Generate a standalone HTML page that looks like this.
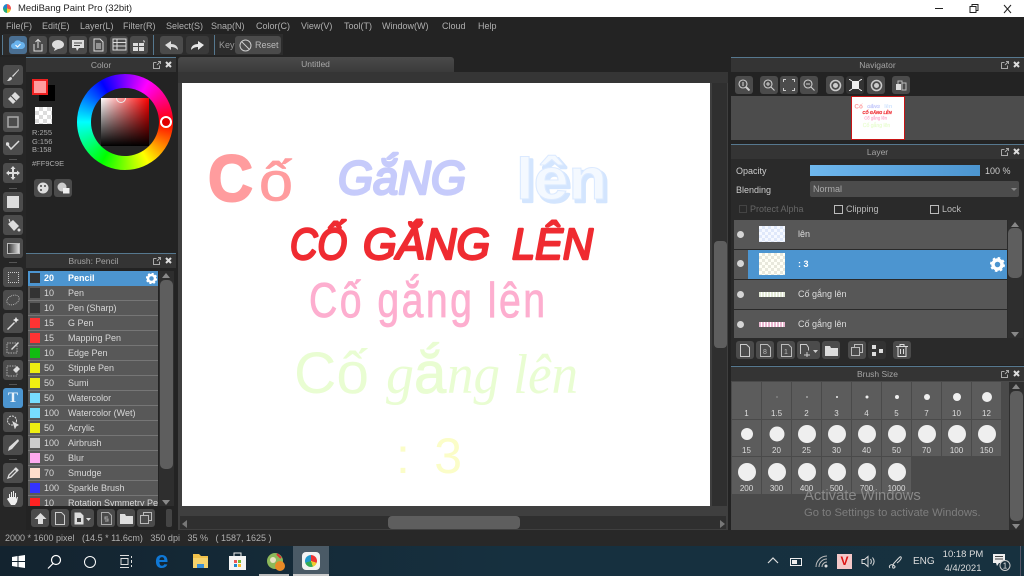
<!DOCTYPE html>
<html><head><meta charset="utf-8"><title>MediBang Paint Pro</title>
<style>
*{box-sizing:border-box}
html,body{margin:0;padding:0;background:#232323}
body{width:1024px;height:576px;overflow:hidden;background:#232323;position:relative;font-family:"Liberation Sans","Noto Sans CJK SC",sans-serif;font-size:9px;color:#c8c8c8;filter:blur(.35px)}
.a{position:absolute}
.t{position:absolute;white-space:nowrap}
.menu span{position:absolute;top:21px;font-size:9px;color:#b0b0b0;white-space:nowrap}
.b{position:absolute;width:18px;height:18px;background:#4b4b4b;border-radius:3px;display:flex;align-items:center;justify-content:center}
.tool{position:absolute;left:3px;width:20px;height:20px;background:#4c4c4c;border-radius:3px;display:flex;align-items:center;justify-content:center}
.sep{position:absolute;left:9px;width:8px;height:1px;background:#555}
.ph{position:absolute;height:15px;background:#343434;border-top:1px solid #56788f;text-align:center;font-size:8.5px;line-height:15px;color:#a5a5a5}
.row{position:absolute;left:28px;width:130px;height:15px;background:#585858;border-bottom:1px solid #767676;font-size:9px;line-height:14px;color:#d8d8d8}
.row i{position:absolute;left:2px;top:2px;width:10px;height:10px;display:block}
.row b{position:absolute;left:16px;font-weight:normal}
.row u{position:absolute;left:40px;text-decoration:none;white-space:nowrap}
.lay{position:absolute;left:734px;width:273px;height:29px;background:#575757;font-size:9px;color:#ddd;line-height:28px}
.dot{position:absolute;left:737px;width:7px;height:7px;border-radius:50%;background:#d5d5d5}
.ck{background-size:6px 6px}
.cell{position:absolute;width:29px;height:36px;background:#5c5c5c;text-align:center;font-size:8px;color:#ddd}
.cell s{position:absolute;left:50%;top:15px;transform:translate(-50%,-50%);background:#efefef;border-radius:50%;display:block}
.cell em{position:absolute;left:0;right:0;bottom:0;font-style:normal;line-height:10px}
.up,.dn{position:absolute;width:0;height:0;border-left:4px solid transparent;border-right:4px solid transparent}
.up{border-bottom:5px solid #888}
.dn{border-top:5px solid #888}
</style></head><body>

<!-- title bar -->
<div class="a" style="left:0;top:0;width:1024px;height:17px;background:#fff"></div>
<div class="a" style="left:3px;top:4px;width:8px;height:9px;border-radius:50%;background:conic-gradient(#e55 0 30%,#ec3 0 50%,#2a7 0 75%,#28c 0)"></div>
<div class="t" style="left:18px;top:3px;font-size:9.5px;color:#222">MediBang Paint Pro (32bit)</div>
<svg class="a" style="left:930px;top:2px" width="94" height="14" fill="none" stroke="#222"><path d="M5 6.500h8"/><path d="M40 4.500h6v6h-6zM42 4.500v-2h6v6h-2"/><path d="M74 3l7 8M81 3l-7 8"/></svg>

<!-- menu -->
<div class="menu">
<span style="left:6px">File(F)</span><span style="left:42px">Edit(E)</span><span style="left:80px">Layer(L)</span><span style="left:123px">Filter(R)</span><span style="left:166px">Select(S)</span><span style="left:211px">Snap(N)</span><span style="left:256px">Color(C)</span><span style="left:301px">View(V)</span><span style="left:344px">Tool(T)</span><span style="left:382px">Window(W)</span><span style="left:442px">Cloud</span><span style="left:478px">Help</span>
</div>

<!-- toolbar -->
<div class="a" style="left:3px;top:34px;width:280px;height:21px;background:#2c2c2c"></div>
<div class="a" style="left:2px;top:35px;width:1px;height:20px;background:#56788f"></div>
<div class="a" style="left:153px;top:35px;width:1px;height:20px;background:#56788f"></div>
<div class="a" style="left:214px;top:35px;width:1px;height:20px;background:#56788f"></div>
<div class="b" style="left:9px;top:36px;background:#4a6f92"><svg width="14" height="12"><path d="M3 10a3 3 0 0 1 0-6 4 4 0 0 1 7-1 3.500 3.500 0 0 1 1 7z" fill="#69b3ee"/><path d="M4.500 6l2 2 3-3" stroke="#fff" fill="none"/></svg></div>
<div class="b" style="left:29px;top:36px"><svg width="12" height="14" fill="none" stroke="#ddd"><path d="M2 6v7h8V6M6 10V2M3.500 4L6 1.500 8.500 4"/></svg></div>
<div class="b" style="left:49px;top:36px"><svg width="14" height="12"><ellipse cx="7" cy="5.500" rx="6" ry="4.500" fill="#ddd"/><path d="M4 9l-1 3 4-2z" fill="#ddd"/></svg></div>
<div class="b" style="left:69px;top:36px"><svg width="14" height="13"><path d="M1 1h12v8H8l-2 3-1-3H1z" fill="#ddd"/><path d="M3 4h8M3 6.500h6" stroke="#444"/></svg></div>
<div class="b" style="left:89px;top:36px"><svg width="11" height="14" fill="none" stroke="#ddd"><path d="M1 1h6l3 3v9H1zM3 6h5M3 8h5M3 10h5"/></svg></div>
<div class="b" style="left:110px;top:36px"><svg width="15" height="14" fill="none" stroke="#ddd"><path d="M1 1h13v11H1zM1 4.500h13M1 8h13M5 1v11"/></svg></div>
<div class="b" style="left:130px;top:36px"><svg width="14" height="13"><path d="M1 4h5v3H1zM7 4h5v3H7zM1 8h5v4H1zM7 8h5v4H7z" fill="#ddd"/><path d="M11 1l2 1-1 2z" fill="#ddd"/></svg></div>
<div class="b" style="left:160px;top:36px;width:23px"><svg width="15" height="11"><path d="M1 5l6-4v3c4 0 7 2 7 6-2-2-4-3-7-3v3z" fill="#ddd"/></svg></div>
<div class="b" style="left:186px;top:36px;width:23px;background:#3a3a3a"><svg width="15" height="11"><path d="M14 5L8 1v3C4 4 1 6 1 10c2-2 4-3 7-3v3z" fill="#e8e8e8"/></svg></div>
<div class="t" style="left:219px;top:40px;color:#999">Key</div>
<div class="b" style="left:235px;top:36px;width:46px;justify-content:flex-start;padding-left:4px"><svg width="13" height="13" fill="none" stroke="#ccc"><circle cx="6.500" cy="6.500" r="5.500"/><path d="M3 3l7 7"/></svg><span style="margin-left:3px;color:#bbb">Reset</span></div>

<!-- left tools -->
<div class="a" style="left:0;top:57px;width:26px;height:473px;background:#262626"></div>
<div class="tool" style="top:65px"><svg width="14" height="14"><path d="M13 1L6 8l1 1 6-7zM5 9c-2 0-2 2-4 4 3 0 5-1 5-3z" fill="#ddd"/></svg></div>
<div class="tool" style="top:88px"><svg width="15" height="14"><path d="M9 1l5 5-7 7-5-5z" fill="#ddd"/><path d="M5 5l5 5" stroke="#444"/></svg></div>
<div class="tool" style="top:112px"><svg width="12" height="12" fill="none" stroke="#aaa" stroke-width="1.500"><rect x="1" y="1" width="10" height="10"/></svg></div>
<div class="tool" style="top:135px"><svg width="14" height="13" fill="none" stroke="#ddd" stroke-width="1.500"><path d="M1 5l4 5 8-8"/><circle cx="1.500" cy="5" r="1" fill="#ddd"/></svg></div>
<div class="sep" style="top:159px"></div>
<div class="tool" style="top:163px"><svg width="14" height="14" fill="#ddd"><path d="M6 3h2v3h3v2H8v3H6V8H3V6h3z"/><path d="M7 0l2.500 3h-5zM7 14l-2.500-3h5zM0 7l3-2.500v5zM14 7l-3-2.500v5z"/></svg></div>
<div class="sep" style="top:188px"></div>
<div class="tool" style="top:192px"><div style="width:12px;height:12px;background:#ddd"></div></div>
<div class="tool" style="top:215px"><svg width="15" height="15"><path d="M2 6l5-4 6 6-5 5z" fill="#ddd"/><path d="M4 4L3 1" stroke="#ddd"/><circle cx="13" cy="12" r="1.500" fill="#ddd"/></svg></div>
<div class="tool" style="top:238px"><div style="width:13px;height:11px;background:linear-gradient(90deg,#333,#ddd);border:1px solid #bbb"></div></div>
<div class="sep" style="top:262px"></div>
<div class="tool" style="top:267px"><div style="width:11px;height:11px;border:1px dotted #ccc"></div></div>
<div class="tool" style="top:290px"><div style="width:14px;height:10px;border:1px dotted #bbb;border-radius:50%;transform:rotate(-25deg)"></div></div>
<div class="tool" style="top:313px"><svg width="14" height="14"><path d="M1 13l7-7 1 1-7 7z" fill="#ddd"/><path d="M10 1l1 2 2 1-2 1-1 2-1-2-2-1 2-1z" fill="#eee"/></svg></div>
<div class="tool" style="top:337px"><svg width="14" height="14"><rect x="1" y="3" width="10" height="10" fill="none" stroke="#aaa" stroke-dasharray="1.500 1"/><path d="M5 9l7-7 1 1-7 7z" fill="#ddd"/></svg></div>
<div class="tool" style="top:360px"><svg width="14" height="14"><rect x="1" y="3" width="10" height="10" fill="none" stroke="#aaa" stroke-dasharray="1.500 1"/><path d="M7 7l4-4 3 3-4 4z" fill="#ddd"/></svg></div>
<div class="sep" style="top:384px"></div>
<div class="tool" style="top:388px;background:#4c95d0;font:bold 15px 'Liberation Serif',serif;color:#e8f2fa">T</div>
<div class="tool" style="top:412px"><svg width="14" height="14" fill="none" stroke="#ddd"><circle cx="6" cy="5.500" r="4.500" stroke-dasharray="2 1"/><path d="M7 7l5 3-2 1-1 2z" fill="#ddd"/></svg></div>
<div class="tool" style="top:435px"><svg width="14" height="14"><path d="M12 1l1 2-7 8-4 2 1-4z" fill="#ddd"/></svg></div>
<div class="sep" style="top:459px"></div>
<div class="tool" style="top:463px"><svg width="14" height="14" fill="none" stroke="#ddd" stroke-width="1.300"><path d="M2 12l1-3 6-6 2 2-6 6z"/><path d="M9 2l3 3" stroke-width="2.500"/></svg></div>
<div class="tool" style="top:487px"><svg width="14" height="15"><path d="M3 8V4h1v3h1V2h1v5h1V1h1v6h1V3h1v6l1-2h1l-1 5-2 3H5L1 9l1-1z" fill="#eee"/></svg></div>

<!-- color panel -->
<div class="a" style="left:26px;top:57px;width:150px;height:195px;background:#232323"></div>
<div class="ph" style="left:26px;top:57px;width:150px">Color</div>
<svg class="a" style="left:152px;top:60px" width="24" height="10" fill="none" stroke="#aaa"><path d="M1.500 2.500h3M1.500 2.500v6h6v-3M5 5l3-3M6 1.500h2.500V4"/><path d="M14 2l5 5M19 2l-5 5" stroke="#ddd" stroke-width="2"/></svg>
<div class="a" style="left:39px;top:85px;width:16px;height:16px;background:#000"></div>
<div class="a" style="left:32px;top:79px;width:16px;height:16px;background:#ff9c9e;border:2px solid #ee2020"></div>
<div class="a" style="left:35px;top:107px;width:17px;height:17px;background:conic-gradient(#dcdcdc 25%,#fff 0 50%,#dcdcdc 0 75%,#fff 0);background-size:8px 8px"></div>
<div class="t" style="left:32px;top:129px;font-size:7.500px;line-height:8.500px;color:#aaa">R:255<br>G:156<br>B:158</div>
<div class="t" style="left:32px;top:159px;font-size:7.500px;color:#aaa">#FF9C9E</div>
<div class="b" style="left:34px;top:179px"><svg width="12" height="12"><circle cx="6" cy="6" r="5.500" fill="#ddd"/><circle cx="4" cy="4" r="1" fill="#444"/><circle cx="8" cy="4" r="1" fill="#444"/><circle cx="4" cy="8" r="1" fill="#444"/></svg></div>
<div class="b" style="left:54px;top:179px"><svg width="13" height="12"><circle cx="5" cy="5" r="4.500" fill="#ccc"/><rect x="6" y="6" width="6.500" height="5.500" fill="#eee"/></svg></div>
<div class="a" style="left:77px;top:74px;width:96px;height:96px;border-radius:50%;background:conic-gradient(from 90deg,#f00,#ff0,#0f0,#0ff,#00f,#f0f,#f00)"></div>
<div class="a" style="left:91px;top:88px;width:68px;height:68px;border-radius:50%;background:#232323"></div>
<div class="a" style="left:101px;top:98px;width:48px;height:48px;background:linear-gradient(0deg,#000,transparent),linear-gradient(90deg,#fff,#f00);overflow:hidden"><div class="a" style="left:15px;top:-5px;width:10px;height:10px;border:1.500px solid #eee;border-radius:50%"></div></div>
<div class="a" style="left:160px;top:116px;width:12px;height:12px;border-radius:50%;border:2.500px solid #fff;background:#e00000"></div>

<!-- brush panel -->
<div class="a" style="left:26px;top:253px;width:150px;height:277px;background:#232323"></div>
<div class="ph" style="left:26px;top:253px;width:150px;padding-right:15px">Brush: Pencil</div>
<svg class="a" style="left:152px;top:256px" width="24" height="10" fill="none" stroke="#aaa"><path d="M1.500 2.500h3M1.500 2.500v6h6v-3M5 5l3-3M6 1.500h2.500V4"/><path d="M14 2l5 5M19 2l-5 5" stroke="#ddd" stroke-width="2"/></svg>
<div class="a" style="left:28px;top:271px;width:130px;height:235px;overflow:hidden">
<div class="row" style="left:0;top:0;background:#4c95d0;color:#fff;font-weight:bold;border:0"><i style="background:#333"></i><b style="font-weight:bold">20</b><u>Pencil</u><svg class="a" style="left:118px;top:2px" width="11" height="11"><circle cx="5.500" cy="5.500" r="3.500" fill="none" stroke="#fff" stroke-width="2.500"/><circle cx="5.500" cy="5.500" r="5" fill="none" stroke="#fff" stroke-width="1.500" stroke-dasharray="2 1.930"/></svg></div>
<div class="row" style="left:0;top:15px"><i style="background:#333"></i><b>10</b><u>Pen</u></div>
<div class="row" style="left:0;top:30px"><i style="background:#333"></i><b>10</b><u>Pen (Sharp)</u></div>
<div class="row" style="left:0;top:45px"><i style="background:#f33"></i><b>15</b><u>G Pen</u></div>
<div class="row" style="left:0;top:60px"><i style="background:#f33"></i><b>15</b><u>Mapping Pen</u></div>
<div class="row" style="left:0;top:75px"><i style="background:#1b1"></i><b>10</b><u>Edge Pen</u></div>
<div class="row" style="left:0;top:90px"><i style="background:#ee1"></i><b>50</b><u>Stipple Pen</u></div>
<div class="row" style="left:0;top:105px"><i style="background:#ee1"></i><b>50</b><u>Sumi</u></div>
<div class="row" style="left:0;top:120px"><i style="background:#7df"></i><b>50</b><u>Watercolor</u></div>
<div class="row" style="left:0;top:135px"><i style="background:#7df"></i><b>100</b><u>Watercolor (Wet)</u></div>
<div class="row" style="left:0;top:150px"><i style="background:#ee1"></i><b>50</b><u>Acrylic</u></div>
<div class="row" style="left:0;top:165px"><i style="background:#ccc"></i><b>100</b><u>Airbrush</u></div>
<div class="row" style="left:0;top:180px"><i style="background:#fae"></i><b>50</b><u>Blur</u></div>
<div class="row" style="left:0;top:195px"><i style="background:#fdc"></i><b>70</b><u>Smudge</u></div>
<div class="row" style="left:0;top:210px"><i style="background:#33f"></i><b>100</b><u>Sparkle Brush</u></div>
<div class="row" style="left:0;top:225px"><i style="background:#f22"></i><b>10</b><u>Rotation Symmetry Pen</u></div>
</div>
<div class="a" style="left:159px;top:271px;width:15px;height:235px;background:#2e2e2e"></div>
<div class="a" style="left:160px;top:280px;width:13px;height:189px;background:#5e5e5e;border-radius:5px"></div>
<div class="up" style="left:162px;top:273px"></div><div class="dn" style="left:162px;top:500px"></div>
<div class="b" style="left:31px;top:509px"><svg width="13" height="13"><path d="M6.500 1l6 6H9v5H4V7H.500z" fill="#ddd"/></svg></div>
<div class="b" style="left:51px;top:509px"><svg width="10" height="13" fill="none" stroke="#ccc"><path d="M.500.500h6l3 3v9h-9z"/></svg></div>
<div class="b" style="left:71px;top:509px;width:23px;justify-content:flex-start;padding-left:3px"><svg width="17" height="13"><path d="M.500.500h6l3 3v9h-9z" fill="#ddd"/><path d="M3 6h4v4H3z" fill="#444"/><path d="M12 6h5l-2.500 3z" fill="#ddd"/></svg></div>
<div class="b" style="left:97px;top:509px"><svg width="11" height="13" fill="none" stroke="#aaa"><path d="M.500.500h7l3 3v9h-10zM7 5H4v2h3v2H4"/></svg></div>
<div class="b" style="left:117px;top:509px"><svg width="13" height="11"><path d="M0 1h5l1 2h7v8H0z" fill="#ddd"/></svg></div>
<div class="b" style="left:137px;top:509px"><svg width="12" height="12" fill="none" stroke="#bbb"><path d="M.500 3.500h8v8h-8zM3.500 3.500v-3h8v8h-3"/></svg></div>
<div class="a" style="left:166px;top:509px;width:6px;height:18px;background:#444;border-radius:2px"></div>

<!-- canvas area -->
<div class="a" style="left:178px;top:57px;width:276px;height:15px;background:linear-gradient(#4a4a4a,#3a3a3a);border-radius:3px 3px 0 0;text-align:center;line-height:15px;font-size:8.500px;color:#aaa;padding-right:1px">Untitled</div>
<div class="a" style="left:178px;top:72px;width:550px;height:458px;background:#3f3f3f"></div>
<div class="a" style="left:178px;top:72px;width:550px;height:11px;background:#353535"></div>
<div class="a" style="left:182px;top:83px;width:528px;height:423px;background:#fff"></div>
<svg class="a" style="left:182px;top:83px" width="528" height="423" viewBox="182 83 528 423">
<g font-family="'Liberation Sans',sans-serif">
<text x="208" y="201" font-size="66" font-weight="bold" fill="#ff9c9e" stroke="#ff9c9e" stroke-width="2" stroke-linejoin="round" textLength="45" lengthAdjust="spacingAndGlyphs">C</text>
<text x="259" y="200" font-size="54" fill="#ff9c9e" stroke="#ff9c9e" stroke-width=".8" textLength="34" lengthAdjust="spacingAndGlyphs">ố</text>
<text x="338" y="194" font-size="47" font-style="italic" fill="#c6cbfb" stroke="#c6cbfb" stroke-width="2.500" stroke-linejoin="round" textLength="128" lengthAdjust="spacingAndGlyphs">GắNG</text>
<text x="519" y="202" font-size="58" font-weight="bold" fill="#d3e5fe" stroke="#d3e5fe" stroke-width="2.500" stroke-linejoin="round" textLength="91" lengthAdjust="spacingAndGlyphs">lên</text>
<text x="516" y="199" font-size="58" font-weight="bold" fill="#f4f9ff" stroke="#dceaff" stroke-width="1" textLength="91" lengthAdjust="spacingAndGlyphs">lên</text>
<g font-size="44" font-style="italic" fill="#ef2b31" stroke="#ef2b31" stroke-width="2.400" stroke-linejoin="round">
<text x="290" y="259" textLength="57" lengthAdjust="spacingAndGlyphs">CỐ</text>
<text x="363" y="259" textLength="127" lengthAdjust="spacingAndGlyphs">GẮNG</text>
<text x="512" y="259" textLength="81" lengthAdjust="spacingAndGlyphs">LÊN</text>
</g>
<text transform="translate(309 317) scale(.8 1)" x="0" y="0" font-size="49" fill="#fdaecf" stroke="#fdaecf" stroke-width=".8" textLength="295" lengthAdjust="spacing">Cố gắng lên</text>
<text x="294" y="393" font-size="58" fill="#e9fdd2" textLength="75" lengthAdjust="spacingAndGlyphs">Cố</text>
<text x="386" y="393" font-size="56" font-style="italic" font-family="'Liberation Serif',serif" fill="#e9fdd2">g</text>
<text x="414" y="393" font-size="58" fill="#e9fdd2" stroke="#e9fdd2" stroke-width=".8">ắ</text>
<text x="447" y="393" font-size="56" font-style="italic" font-family="'Liberation Serif',serif" fill="#e9fdd2" textLength="131" lengthAdjust="spacingAndGlyphs">ng lên</text>
<text x="396" y="473" font-size="50" fill="#fbfdc8" textLength="66" lengthAdjust="spacing">: 3</text>
</g></svg>
<!-- canvas scrollbars -->
<div class="a" style="left:712px;top:83px;width:15px;height:423px;background:#2f2f2f"></div>
<div class="a" style="left:714px;top:241px;width:13px;height:107px;background:#5e5e5e;border-radius:4px"></div>
<div class="a" style="left:180px;top:516px;width:546px;height:13px;background:#2f2f2f"></div>
<div class="a" style="left:388px;top:516px;width:132px;height:13px;background:#5e5e5e;border-radius:4px"></div>
<div class="a" style="left:182px;top:520px;width:0;height:0;border:4px solid transparent;border-right:5px solid #777;border-left:0"></div>
<div class="a" style="left:720px;top:520px;width:0;height:0;border:4px solid transparent;border-left:5px solid #777;border-right:0"></div>

<!-- navigator -->
<div class="a" style="left:731px;top:57px;width:293px;height:86px;background:#232323"></div>
<div class="ph" style="left:731px;top:57px;width:293px">Navigator</div>
<svg class="a" style="left:1000px;top:60px" width="24" height="10" fill="none" stroke="#aaa"><path d="M1.500 2.500h3M1.500 2.500v6h6v-3M5 5l3-3M6 1.500h2.500V4"/><path d="M14 2l5 5M19 2l-5 5" stroke="#ddd" stroke-width="2"/></svg>
<div class="b" style="left:735px;top:76px"><svg width="12" height="12" fill="none" stroke="#ccc" stroke-width="1.100"><circle cx="5" cy="5" r="4"/><path d="M8 8l3.500 3.500" stroke-width="2"/><path d="M5 3v4"/></svg></div>
<div class="b" style="left:760px;top:76px"><svg width="12" height="12" fill="none" stroke="#ccc" stroke-width="1.100"><circle cx="5" cy="5" r="4"/><path d="M8 8l3.500 3.500M3 5h4M5 3v4"/></svg></div>
<div class="b" style="left:780px;top:76px"><svg width="12" height="12" fill="none" stroke="#ccc"><path d="M.500 3V.500H3M9 .500h2.500V3M11.500 9v2.500H9M3 11.500H.500V9"/></svg></div>
<div class="b" style="left:800px;top:76px"><svg width="12" height="12" fill="none" stroke="#ccc" stroke-width="1.100"><circle cx="5" cy="5" r="4"/><path d="M8 8l3.500 3.500M3 5h4"/></svg></div>
<div class="b" style="left:826px;top:76px"><svg width="13" height="13"><circle cx="6.500" cy="6.500" r="5" fill="none" stroke="#ccc" stroke-width="1.500"/><circle cx="6.500" cy="6.500" r="2.500" fill="#ccc"/></svg></div>
<div class="b" style="left:846px;top:76px;background:#333"><svg width="13" height="12"><path d="M3 2h7v8H3z" fill="#eee"/><path d="M0 0l3 2M13 0l-3 2M0 12l3-2M13 12l-3-2" stroke="#eee"/></svg></div>
<div class="b" style="left:867px;top:76px"><svg width="13" height="13"><circle cx="6.500" cy="6.500" r="5" fill="none" stroke="#ccc" stroke-width="1.500"/><circle cx="6.500" cy="6.500" r="2.500" fill="#ccc"/></svg></div>
<div class="b" style="left:892px;top:76px"><svg width="12" height="12"><rect x="1" y="5" width="5" height="6" fill="#ddd"/><rect x="7" y="4" width="4" height="7" fill="none" stroke="#bbb"/><path d="M3 5V2h4v2" fill="none" stroke="#bbb"/></svg></div>
<div class="a" style="left:731px;top:96px;width:293px;height:44px;background:#4c4c4c"></div>
<div class="a" style="left:851px;top:96px;width:54px;height:44px;background:#fff;border:1.500px solid #c81414;overflow:hidden">
<svg width="51" height="41" viewBox="182 83 528 423" style="display:block" preserveAspectRatio="none"><g font-family="'Liberation Sans',sans-serif">
<text x="207" y="201" font-size="66" font-weight="bold" fill="#ff9c9e">Cố</text>
<text x="338" y="194" font-size="47" font-style="italic" fill="#c6cbfb" stroke="#c6cbfb" stroke-width="3">GắNG</text>
<text x="516" y="199" font-size="58" font-weight="bold" fill="#d3e5fe">lên</text>
<text x="290" y="259" font-size="46" font-weight="bold" font-style="italic" fill="#ef2b31" stroke="#ef2b31" stroke-width="2" textLength="303" lengthAdjust="spacingAndGlyphs">CỐ GẮNG LÊN</text>
<text x="309" y="317" font-size="49" fill="#fdaecf" stroke="#fdaecf" stroke-width="2" textLength="236" lengthAdjust="spacingAndGlyphs">Cố gắng lên</text>
<text x="294" y="393" font-size="56" fill="#e9fdd2" stroke="#e9fdd2" stroke-width="2" textLength="284" lengthAdjust="spacingAndGlyphs">Cố gắng lên</text>
</g></svg>
</div>

<!-- layer -->
<div class="a" style="left:731px;top:144px;width:293px;height:221px;background:#2a2a2a"></div>
<div class="ph" style="left:731px;top:144px;width:293px">Layer</div>
<svg class="a" style="left:1000px;top:147px" width="24" height="10" fill="none" stroke="#aaa"><path d="M1.500 2.500h3M1.500 2.500v6h6v-3M5 5l3-3M6 1.500h2.500V4"/><path d="M14 2l5 5M19 2l-5 5" stroke="#ddd" stroke-width="2"/></svg>
<div class="t" style="left:736px;top:166px;color:#ccc">Opacity</div>
<div class="a" style="left:810px;top:165px;width:170px;height:11px;background:linear-gradient(90deg,#6fb8ee,#4c95d0)"></div>
<div class="t" style="left:985px;top:166px;color:#ccc">100 %</div>
<div class="t" style="left:736px;top:185px;color:#ccc">Blending</div>
<div class="a" style="left:810px;top:181px;width:209px;height:16px;background:#4c4c4c;border-radius:2px;padding:3px;color:#aaa">Normal</div>
<div class="a" style="left:1011px;top:188px;width:0;height:0;border:3px solid transparent;border-top:3px solid #888"></div>
<div class="a" style="left:739px;top:205px;width:8px;height:8px;border:1px solid #444"></div>
<div class="t" style="left:750px;top:204px;color:#666">Protect Alpha</div>
<div class="a" style="left:834px;top:205px;width:9px;height:9px;border:1px solid #bbb"></div>
<div class="t" style="left:846px;top:204px;color:#bbb">Clipping</div>
<div class="a" style="left:930px;top:205px;width:9px;height:9px;border:1px solid #bbb"></div>
<div class="t" style="left:942px;top:204px;color:#bbb">Lock</div>

<div class="lay" style="top:220px;height:29px"><span class="t" style="left:64px">lên</span></div>
<div class="a" style="left:734px;top:250px;width:14px;height:29px;background:#575757"></div>
<div class="lay" style="top:250px;left:748px;width:259px;height:29px;background:#4c95d0;color:#fff;font-weight:bold"><span class="t" style="left:50px">: 3</span><svg class="a" style="left:242px;top:7px" width="15" height="15"><circle cx="7.500" cy="7.500" r="4.500" fill="none" stroke="#fff" stroke-width="3.500"/><circle cx="7.500" cy="7.500" r="6.500" fill="none" stroke="#fff" stroke-width="2" stroke-dasharray="2.550 2.550"/></svg></div>
<div class="lay" style="top:280px;height:29px"><span class="t" style="left:64px">Cố gắng lên</span></div>
<div class="lay" style="top:310px;height:28px"><span class="t" style="left:64px">Cố gắng lên</span></div>
<div class="dot" style="top:231px"></div><div class="dot" style="top:260px"></div><div class="dot" style="top:291px"></div><div class="dot" style="top:321px"></div>
<div class="a ck" style="left:759px;top:226px;width:26px;height:16px;background:conic-gradient(#dfe8fa 25%,#f6f9ff 0 50%,#dfe8fa 0 75%,#f6f9ff 0);background-size:6px 6px"></div>
<div class="a ck" style="left:759px;top:253px;width:26px;height:22px;background:conic-gradient(#e8e8dc 25%,#fffff6 0 50%,#e8e8dc 0 75%,#fffff6 0);background-size:6px 6px"></div>
<div class="a" style="left:759px;top:292px;width:26px;height:5px;background:repeating-linear-gradient(90deg,#e2e8d6 0 2px,#fff 2px 3px)"></div>
<div class="a" style="left:759px;top:322px;width:26px;height:5px;background:repeating-linear-gradient(90deg,#e8b8d0 0 2px,#fff 2px 3px)"></div>
<div class="a" style="left:1008px;top:220px;width:15px;height:118px;background:#2e2e2e"></div>
<div class="a" style="left:1008px;top:228px;width:14px;height:50px;background:#5e5e5e;border-radius:5px"></div>
<div class="up" style="left:1011px;top:222px"></div><div class="dn" style="left:1011px;top:332px"></div>
<div class="b" style="left:736px;top:341px"><svg width="10" height="13" fill="none" stroke="#ccc"><path d="M.500.500h6l3 3v9h-9z"/></svg></div>
<div class="b" style="left:756px;top:341px"><svg width="11" height="13" fill="none" stroke="#bbb"><path d="M.500.500h7l3 3v9h-10z"/><text x="3" y="10" font-size="7" fill="#bbb" stroke="none" font-family="Liberation Sans">8</text></svg></div>
<div class="b" style="left:777px;top:341px"><svg width="11" height="13" fill="none" stroke="#bbb"><path d="M.500.500h7l3 3v9h-10z"/><text x="3" y="10" font-size="7" fill="#bbb" stroke="none" font-family="Liberation Sans">1</text></svg></div>
<div class="b" style="left:797px;top:341px;width:23px;justify-content:flex-start;padding-left:3px"><svg width="18" height="13" fill="none" stroke="#ccc"><path d="M.500 10V.500h6l2 3v3M4 11h6M7 8v6"/><path d="M13 6h5l-2.500 3z" fill="#ccc" stroke="none"/></svg></div>
<div class="b" style="left:822px;top:341px"><svg width="13" height="11"><path d="M0 1h5l1 2h7v8H0z" fill="#ddd"/></svg></div>
<div class="b" style="left:848px;top:341px"><svg width="12" height="12" fill="none" stroke="#bbb"><path d="M.500 3.500h8v8h-8zM3.500 3.500v-3h8v8h-3"/></svg></div>
<div class="b" style="left:868px;top:341px;background:#333"><svg width="13" height="13"><path d="M1 1h4v4H1zM1 8h4v4H1zM8 5h4v4H8z" fill="#ddd"/></svg></div>
<div class="b" style="left:893px;top:341px"><svg width="12" height="13" fill="none" stroke="#ddd"><path d="M0 2.500h12M4 2.500v-2h4v2M2 2.500v10h8v-10M4.500 5v5M7.500 5v5"/></svg></div>

<!-- brush size -->
<div class="a" style="left:731px;top:366px;width:293px;height:165px;background:#4a4a4a"></div>
<div class="ph" style="left:731px;top:366px;width:293px">Brush Size</div>
<svg class="a" style="left:1000px;top:369px" width="24" height="10" fill="none" stroke="#aaa"><path d="M1.500 2.500h3M1.500 2.500v6h6v-3M5 5l3-3M6 1.500h2.500V4"/><path d="M14 2l5 5M19 2l-5 5" stroke="#ddd" stroke-width="2"/></svg>
<div class="cell" style="left:732px;top:382px;height:37px"><em>1</em></div>
<div class="cell" style="left:762px;top:382px;height:37px"><s style="width:1px;height:1px"></s><em>1.5</em></div>
<div class="cell" style="left:792px;top:382px;height:37px"><s style="width:1px;height:2px"></s><em>2</em></div>
<div class="cell" style="left:822px;top:382px;height:37px"><s style="width:2px;height:2px"></s><em>3</em></div>
<div class="cell" style="left:852px;top:382px;height:37px"><s style="width:3px;height:3px"></s><em>4</em></div>
<div class="cell" style="left:882px;top:382px;height:37px"><s style="width:4px;height:4px"></s><em>5</em></div>
<div class="cell" style="left:912px;top:382px;height:37px"><s style="width:6px;height:6px"></s><em>7</em></div>
<div class="cell" style="left:942px;top:382px;height:37px"><s style="width:8px;height:8px"></s><em>10</em></div>
<div class="cell" style="left:972px;top:382px;height:37px"><s style="width:10px;height:10px"></s><em>12</em></div>
<div class="cell" style="left:732px;top:420px"><s style="width:12px;height:12px;top:14px"></s><em>15</em></div>
<div class="cell" style="left:762px;top:420px"><s style="width:15px;height:15px;top:14px"></s><em>20</em></div>
<div class="cell" style="left:792px;top:420px"><s style="width:18px;height:18px;top:14px"></s><em>25</em></div>
<div class="cell" style="left:822px;top:420px"><s style="width:18px;height:18px;top:14px"></s><em>30</em></div>
<div class="cell" style="left:852px;top:420px"><s style="width:18px;height:18px;top:14px"></s><em>40</em></div>
<div class="cell" style="left:882px;top:420px"><s style="width:18px;height:18px;top:14px"></s><em>50</em></div>
<div class="cell" style="left:912px;top:420px"><s style="width:18px;height:18px;top:14px"></s><em>70</em></div>
<div class="cell" style="left:942px;top:420px"><s style="width:18px;height:18px;top:14px"></s><em>100</em></div>
<div class="cell" style="left:972px;top:420px"><s style="width:18px;height:18px;top:14px"></s><em>150</em></div>
<div class="cell" style="left:732px;top:457px;height:37px"><s style="width:18px;height:18px"></s><em>200</em></div>
<div class="cell" style="left:762px;top:457px;height:37px"><s style="width:18px;height:18px"></s><em>300</em></div>
<div class="cell" style="left:792px;top:457px;height:37px"><s style="width:18px;height:18px"></s><em>400</em></div>
<div class="cell" style="left:822px;top:457px;height:37px"><s style="width:18px;height:18px"></s><em>500</em></div>
<div class="cell" style="left:852px;top:457px;height:37px"><s style="width:18px;height:18px"></s><em>700</em></div>
<div class="cell" style="left:882px;top:457px;height:37px"><s style="width:18px;height:18px"></s><em>1000</em></div>
<div class="a" style="left:1009px;top:382px;width:15px;height:149px;background:#2e2e2e"></div>
<div class="a" style="left:1010px;top:391px;width:13px;height:130px;background:#5e5e5e;border-radius:5px"></div>
<div class="up" style="left:1012px;top:384px"></div><div class="dn" style="left:1012px;top:524px"></div>
<div class="t" style="left:804px;top:488px;font-size:14.800px;color:#8a8a8a">Activate Windows</div>
<div class="t" style="left:804px;top:507px;font-size:11.200px;color:#7d7d7d">Go to Settings to activate Windows.</div>

<!-- status bar -->
<div class="a" style="left:0;top:530px;width:1024px;height:16px;background:#282828"></div>
<div class="t" style="left:5px;top:533px;font-size:9px;color:#b0b0b0">2000 * 1600 pixel&nbsp;&nbsp;&nbsp;(14.5 * 11.6cm)&nbsp;&nbsp;&nbsp;350 dpi&nbsp;&nbsp;&nbsp;35 %&nbsp;&nbsp;&nbsp;( 1587, 1625 )</div>

<!-- taskbar -->
<div class="a" style="left:0;top:546px;width:1024px;height:30px;background:linear-gradient(90deg,#13232f,#16303f 50%,#17313f)"></div>
<svg class="a" style="left:12px;top:555px" width="13" height="13" fill="#fff"><path d="M0 2l5.500-1v5H0zM6.500 1L13 0v6H6.500zM0 7h5.500v5L0 11zM6.500 7H13v6l-6.500-1z"/></svg>
<svg class="a" style="left:47px;top:554px" width="15" height="15" fill="none" stroke="#fff" stroke-width="1.200"><circle cx="9" cy="6" r="4.500"/><path d="M6 9.500L1 14.500"/></svg>
<div class="a" style="left:84px;top:556px;width:12px;height:12px;border-radius:50%;border:1.500px solid #fff"></div>
<svg class="a" style="left:119px;top:555px" width="14" height="13" fill="none" stroke="#ddd"><path d="M1 .500h9M1 12.500h9M2 3.500h7v6H2zM12.500 1v2M12.500 5v3M12.500 10v2"/></svg>
<div class="t" style="left:155px;top:547px;font:bold 24px 'Liberation Sans',sans-serif;color:#0f78d6;line-height:28px">e</div>
<svg class="a" style="left:192px;top:553px" width="17" height="16"><path d="M1 1h6l2 2h7v3H1z" fill="#f1c14a"/><rect x="1" y="5" width="15" height="10" fill="#f6d36c"/><rect x="5" y="11" width="7" height="4" fill="#3b8fd6"/></svg>
<svg class="a" style="left:228px;top:551px" width="19" height="19"><path d="M1 5h17v14H1z" fill="#f5f5f5"/><path d="M6 6V2h7v4" fill="none" stroke="#eee"/><rect x="6" y="9" width="3" height="3" fill="#e55"/><rect x="10" y="9" width="3" height="3" fill="#7b3"/><rect x="6" y="13" width="3" height="3" fill="#28c"/><rect x="10" y="13" width="3" height="3" fill="#fb2"/></svg>
<svg class="a" style="left:266px;top:552px" width="20" height="20"><circle cx="9" cy="9" r="8" fill="#8db85a"/><circle cx="7" cy="8" r="3" fill="#e8e0c0"/><circle cx="14" cy="14" r="5" fill="#e98a26"/><path d="M11 2l4 4" stroke="#d33" stroke-width="2"/></svg>
<div class="a" style="left:259px;top:574px;width:30px;height:2px;background:#bbb"></div>
<div class="a" style="left:293px;top:546px;width:36px;height:30px;background:#4a5a66"></div>
<div class="a" style="left:293px;top:574px;width:36px;height:2px;background:#ccc"></div>
<div class="a" style="left:302px;top:552px;width:18px;height:18px;background:#f3f3f3;border-radius:4px"></div>
<div class="a" style="left:305px;top:555px;width:12px;height:12px;border-radius:50%;background:conic-gradient(#e33 0 30%,#ec3 0 45%,#3a5 0 70%,#29c 0)"></div>

<svg class="a" style="left:767px;top:556px" width="12" height="10" fill="none" stroke="#ddd" stroke-width="1.200"><path d="M1 7l5-5 5 5"/></svg>
<svg class="a" style="left:790px;top:557px" width="13" height="10"><rect x=".5" y="1.500" width="11" height="7" fill="none" stroke="#eee"/><rect x="2" y="3" width="5" height="4" fill="#eee"/></svg>
<svg class="a" style="left:815px;top:555px" width="13" height="13" fill="none" stroke="#bbb"><path d="M1 12a11 11 0 0 1 11-11M4 12a8 8 0 0 1 8-8M7 12a5 5 0 0 1 5-5"/><circle cx="11" cy="11" r="1.500" fill="#ddd" stroke="none"/></svg>
<div class="a" style="left:837px;top:554px;width:15px;height:15px;background:#f5c8c8;color:#d11;font:bold 12px/15px 'Liberation Sans',sans-serif;text-align:center">V</div>
<svg class="a" style="left:861px;top:555px" width="14" height="13" fill="none" stroke="#ddd"><path d="M1 4.500h2.500L7 1.500v10L3.500 8.500H1zM9.500 4c1 1.500 1 3.500 0 5M11.500 2.500c2 2.500 2 5.500 0 8"/></svg>
<svg class="a" style="left:888px;top:554px" width="16" height="16" fill="none" stroke="#ddd"><path d="M2 14c-2-2 1-4 3-3s3 2 1 3-2-3 1-6 5-6 6-5-1 4-4 6"/></svg>
<div class="t" style="left:913px;top:556px;font-size:10px;color:#ddd">ENG</div>
<div class="t" style="left:942px;top:548px;font-size:9.500px;line-height:14px;color:#ddd;text-align:center;width:42px">10:18 PM<br>4/4/2021</div>
<svg class="a" style="left:992px;top:553px" width="20" height="19"><path d="M1 1h12v9H7l-2 3-1-3H1z" fill="#eee"/><path d="M3 3.500h8M3 6h8" stroke="#444"/><circle cx="13" cy="12.500" r="5" fill="#1a2f3c" stroke="#ccc"/><text x="13" y="15.500" font-size="8" fill="#eee" text-anchor="middle" font-family="Liberation Sans">1</text></svg>
<div class="a" style="left:1020px;top:546px;width:1px;height:30px;background:#556"></div>
</body></html>
